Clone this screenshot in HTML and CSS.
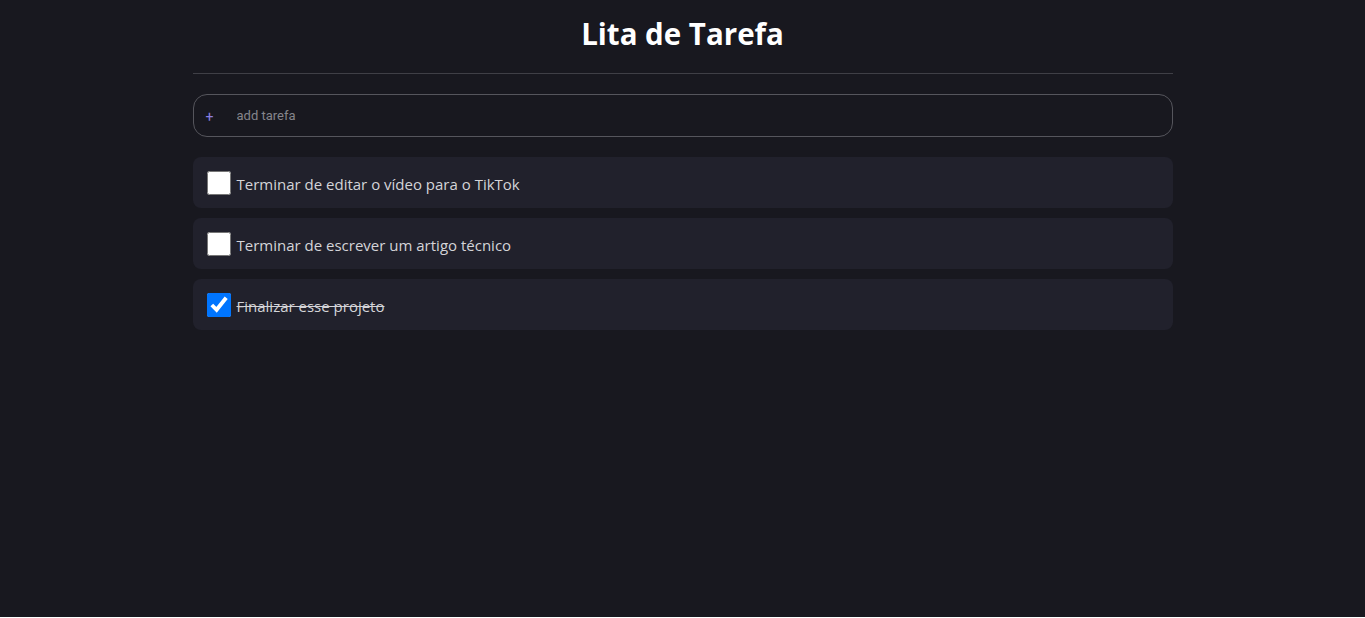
FILE: index.html
```html
<!DOCTYPE html>
<html lang="pt-BR">
<head>
<meta charset="utf-8">
<title>Lita de Tarefa</title>
<link rel="stylesheet" href="styles.css">
</head>
<body>
<main class="app">
  <h1 class="title">Lita de Tarefa</h1>
  <hr class="divider">
  <form class="add-form">
    <span class="plus">+</span>
    <input class="add-input" type="text" placeholder="add tarefa">
  </form>
  <ul class="tasks">
    <li class="task"><input class="check" type="checkbox"><span class="task-text">Terminar de editar o vídeo para o TikTok</span></li>
    <li class="task"><input class="check" type="checkbox"><span class="task-text">Terminar de escrever um artigo técnico</span></li>
    <li class="task done"><input class="check" type="checkbox" checked><span class="task-text">Finalizar esse projeto</span></li>
  </ul>
</main>
</body>
</html>
```
FILE: styles.css
```css
html {
  background: #ffffff;
}
body {
  margin: 0;
  height: 617px;
  background: #18181f;
  font-family: "Open Sans", "Noto Sans", sans-serif;
  color: #d4d4d8;
}
.app {
  width: 980px;
  margin: 0 auto;
  padding-top: 14px;
}
.title {
  margin: 0;
  text-align: center;
  color: #ffffff;
  font-size: 29.5px;
  line-height: 40px;
  font-weight: 700;
}
.divider {
  margin: 19px 0 20px;
  border: 0;
  border-top: 1px solid #3f3f46;
}
.add-form {
  display: flex;
  align-items: center;
  height: 43px;
  box-sizing: border-box;
  border: 1px solid #55555c;
  border-radius: 14px;
  padding: 0 12px;
  margin-bottom: 20px;
}
.plus {
  color: #8b7fe0;
  font-family: "Roboto", sans-serif;
  font-size: 14px;
  width: 31px;
  padding-top: 3px;
}
.add-input {
  flex: 1;
  background: transparent;
  border: 0;
  outline: none;
  color: #d4d4d8;
  font-family: "Roboto", sans-serif;
  font-size: 13px;
  padding: 0;
}
.add-input::placeholder {
  color: #85858b;
}
.tasks {
  list-style: none;
  margin: 0;
  padding: 0;
  display: flex;
  flex-direction: column;
  gap: 10px;
}
.task {
  display: flex;
  align-items: center;
  height: 51px;
  background: #21212c;
  border-radius: 8px;
  padding: 0 14px;
  gap: 6px;
  font-size: 15px;
}
.check {
  width: 24px;
  height: 24px;
  margin: 0;
  accent-color: #0075ff;
}
.task-text {
  padding-top: 2px;
}
.done .task-text {
  text-decoration: line-through;
}
```
